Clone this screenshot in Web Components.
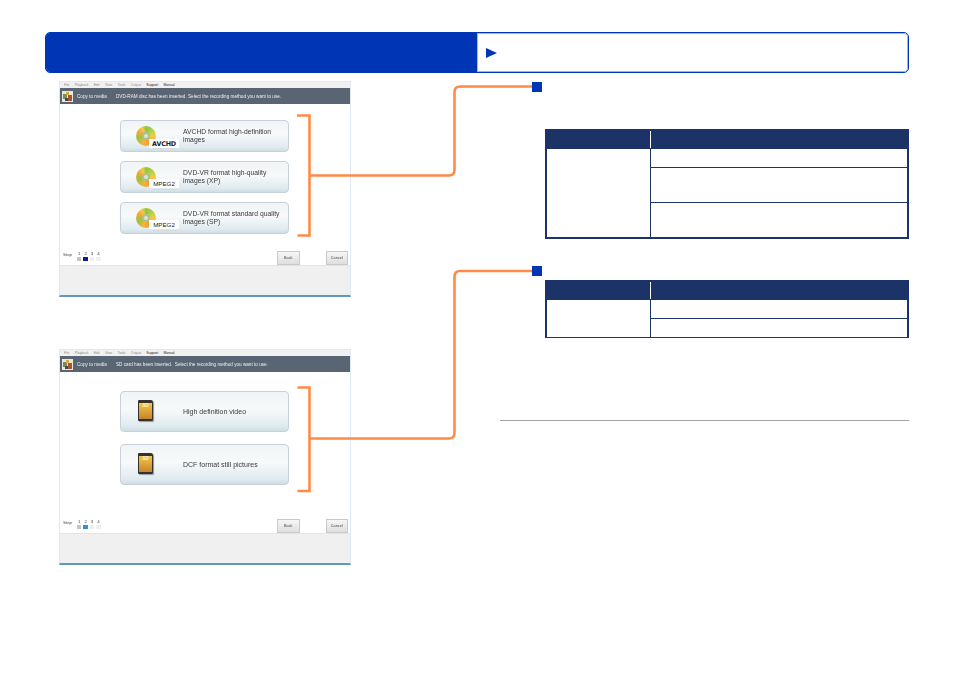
<!DOCTYPE html>
<html lang="en">
<head>
<meta charset="utf-8">
<title>Copy to media</title>
<style>
  html, body { margin: 0; background: #fff; }
  body { font-family: 'Liberation Sans', Arial, sans-serif; overflow: hidden; }
</style>
</head>
<body>
<manual-page>
  <media-screen slot="left" message="DVD-RAM disc has been inserted. Select the recording method you want to use." step-color="#0a1f8f" stack-top="39" btn-height="32" btn-gap="9">
    <media-button kind="disc" badge="AVCHD">AVCHD format high-definition<br>images</media-button>
    <media-button kind="disc" badge="MPEG2">DVD-VR format high-quality<br>images (XP)</media-button>
    <media-button kind="disc" badge="MPEG2">DVD-VR format standard quality<br>images (SP)</media-button>
  </media-screen>
  <media-screen slot="left" message="SD card has been inserted.  Select the recording method you want to use." step-color="#3a8ed8" stack-top="42" btn-height="41" btn-gap="12">
    <media-button kind="sd">High definition video</media-button>
    <media-button kind="sd">DCF format still pictures</media-button>
  </media-screen>

  <spec-section slot="right" gap="37" top="1" rows="18,35,35" bottom-border="2"></spec-section>
  <spec-section slot="right" gap="4" top="27" rows="18,19" bottom-border="1"></spec-section>
</manual-page>

<script>
class ManualPage extends HTMLElement {
  constructor () {
    super()
    this.shadow = this.attachShadow({ mode: 'open' })
  }

  connectedCallback () {
    this.shadow.innerHTML = /*html*/`
    <style>
      :host {
        box-sizing: border-box;
        display: block;
        height: 673px;
        padding: 32px 45px 0;
        position: relative;
        width: 954px;
      }

      .header {
        border: 1px solid #0035b5;
        border-radius: 5px;
        box-sizing: border-box;
        display: flex;
        height: 41px;
        overflow: hidden;
      }

      .header-title {
        background-color: #0035b5;
        flex: 0 0 431px;
      }

      .header-link {
        align-items: center;
        border-radius: 0 4px 4px 0;
        box-shadow: inset 0 0 0 1px #9fb6e6;
        display: flex;
        flex: 1 1 auto;
        padding-left: 9px;
      }

      .arrow {
        border-bottom: 5.5px solid transparent;
        border-left: 11px solid #0035b5;
        border-top: 5.5px solid transparent;
        height: 0;
        width: 0;
      }

      .columns {
        display: grid;
        grid-template-columns: 455px 409px;
        margin-top: 8px;
      }

      .left {
        display: flex;
        flex-direction: column;
        gap: 52px;
        padding-left: 14px;
      }

      .rule {
        border-top: 1px solid #a3a3a3;
        margin-top: 82px;
      }

      svg {
        left: 0;
        pointer-events: none;
        position: absolute;
        top: 0;
      }
    </style>

    <div class="header">
      <div class="header-title"></div>
      <div class="header-link"><div class="arrow"></div></div>
    </div>

    <div class="columns">
      <div class="left"><slot name="left"></slot></div>
      <div class="right">
        <slot name="right"></slot>
        <div class="rule"></div>
      </div>
    </div>

    <svg width="954" height="673" viewBox="0 0 954 673" fill="none" stroke="#ff8b47" stroke-width="2.6">
      <path d="M297 115.5H309.5V235.5H297.5"/>
      <path d="M309.5 175.5H449Q454.5 175.5 454.5 170V92Q454.5 86.5 460 86.5H533"/>
      <path d="M297.5 387.5H309.5V491H297.5"/>
      <path d="M309.5 438.5H449Q454.5 438.5 454.5 433V277Q454.5 271 460 271H533"/>
    </svg>
    `
  }
}

class MediaScreen extends HTMLElement {
  constructor () {
    super()
    this.shadow = this.attachShadow({ mode: 'open' })
  }

  connectedCallback () {
    const message = this.getAttribute('message')
    const stepColor = this.getAttribute('step-color')
    const stackTop = this.getAttribute('stack-top')
    const height = this.getAttribute('btn-height')
    const gap = this.getAttribute('btn-gap')
    const menu = ['File', 'Playback', 'Edit', 'View', 'Tools', 'Output', 'Support', 'Manual']
    const steps = ['#c4c4c4', stepColor, '#eeeeee', '#f0f0f0']

    this.shadow.innerHTML = /*html*/`
    <style>
      :host {
        --btn-height: ${height}px;
        border-bottom: 2px solid #5f9ab8;
        border-left: 1px solid #dfe9f2;
        border-right: 1px solid #dfe9f2;
        border-top: 1px solid #dfe9f2;
        box-sizing: border-box;
        color: #444;
        display: flex;
        filter: blur(0.3px);
        flex-direction: column;
        font-family: 'Liberation Sans', Arial, sans-serif;
        height: 216px;
        width: 292px;
      }

      .menu {
        align-items: center;
        background-color: #f1f1f1;
        color: #8a8a8a;
        display: flex;
        flex: 0 0 6px;
        font-size: 3.4px;
        gap: 5.3px;
        padding-left: 4px;
      }

      .menu span:nth-child(n+7) {
        color: #222;
      }

      .titlebar {
        align-items: center;
        background-color: #5a6573;
        color: #eef0f2;
        display: flex;
        flex: 0 0 16px;
        font-size: 4.65px;
        padding-left: 2px;
        white-space: pre;
      }

      .titlebar svg {
        margin-right: 4px;
      }

      .titlebar .name {
        flex: 0 0 39px;
      }

      .stack {
        display: flex;
        flex-direction: column;
        gap: ${gap}px;
        padding: ${stackTop - 23}px 61px 0 60px;
      }

      .body {
        display: flex;
        flex: 1 1 auto;
        flex-direction: column;
        justify-content: space-between;
      }

      .bottom {
        align-items: flex-end;
        display: flex;
        height: 15px;
        justify-content: space-between;
        padding: 0 2px 0 3px;
      }

      .steps {
        display: flex;
        font-size: 4.4px;
        gap: 5px;
        padding-bottom: 4px;
      }

      .step-list {
        display: flex;
        gap: 2px;
      }

      .step {
        align-items: center;
        display: flex;
        flex-direction: column;
        gap: 1px;
        line-height: 4px;
        width: 4.4px;
      }

      .step i {
        display: block;
        height: 4px;
        width: 4.4px;
      }

      .actions {
        display: flex;
        gap: 26px;
      }

      .action {
        background: linear-gradient(#f6f6f6, #dedede);
        border: 1px solid #c9c9c9;
        box-sizing: border-box;
        font-size: 3.8px;
        height: 14px;
        line-height: 12px;
        text-align: center;
        width: 22.5px;
      }

      .footer {
        background-color: #f0f0f0;
        border-top: 1px solid #e4e4e4;
        box-sizing: border-box;
        flex: 0 0 30px;
      }
    </style>

    <div class="menu">${menu.map(item => `<span>${item}</span>`).join('')}</div>
    <div class="titlebar">
      <svg width="11" height="11" viewBox="0 0 11 11">
        <rect width="11" height="11" fill="#e9e6da"/>
        <rect x="1" y="3" width="4" height="5" fill="#7d8a5c"/>
        <rect x="4" y="1" width="3" height="3" fill="#d9a93c"/>
        <rect x="6" y="4" width="4" height="6" fill="#a8552e"/>
        <rect x="3" y="7" width="3" height="3" fill="#3f4a55"/>
      </svg>
      <span class="name">Copy to media</span>
      <span>${message}</span>
    </div>
    <div class="body">
      <div class="stack"><slot></slot></div>
      <div class="bottom">
        <div class="steps">
          <span>Step</span>
          <div class="step-list">
            ${steps.map((color, i) => `<div class="step"><span>${i + 1}</span><i style="background:${color}"></i></div>`).join('')}
          </div>
        </div>
        <div class="actions">
          <div class="action">Back</div>
          <div class="action">Cancel</div>
        </div>
      </div>
    </div>
    <div class="footer"></div>
    `
  }
}

class MediaButton extends HTMLElement {
  constructor () {
    super()
    this.shadow = this.attachShadow({ mode: 'open' })
  }

  connectedCallback () {
    const kind = this.getAttribute('kind')
    const badge = this.getAttribute('badge')
    const disc = /*html*/`
      <div class="disc"><div class="hole"></div></div>
      <div class="badge ${badge === 'AVCHD' ? 'avchd' : ''}">${badge}</div>
      <div class="shine"></div>
    `
    const sd = /*html*/`
      <div class="sd"><span>SD</span></div>
    `

    this.shadow.innerHTML = /*html*/`
    <style>
      :host {
        align-items: center;
        background: linear-gradient(#f1f4f6 0%, #f7f9fa 45%, #dfeaef 88%, #cfdde4 100%);
        border: 1px solid #c8d1d9;
        border-radius: 4px;
        box-sizing: border-box;
        color: #3a3a3a;
        display: flex;
        font-family: 'Liberation Sans', Arial, sans-serif;
        font-size: ${kind === 'sd' ? 7 : 6.75}px;
        height: var(--btn-height);
        line-height: 8px;
        position: relative;
      }

      .icon {
        flex: 0 0 62px;
        height: 100%;
        position: relative;
      }

      .disc {
        background: conic-gradient(#8cc63f 0deg, #b5d24a 50deg, #f7c948 90deg, #f59a2c 150deg, #f2b53c 200deg, #9cc23c 250deg, #f2a93a 300deg, #f6c94a 335deg, #8cc63f 360deg);
        border-radius: 50%;
        height: 20px;
        left: 15px;
        position: absolute;
        top: 5px;
        width: 20px;
      }

      .hole {
        background-color: #dfe4e0;
        border: 2px solid #a8c48a;
        border-radius: 50%;
        box-sizing: border-box;
        height: 8px;
        margin: 6px;
        width: 8px;
      }

      .badge {
        background-color: #fff;
        color: #222;
        font-size: 6.2px;
        height: 9px;
        left: 28px;
        line-height: 10px;
        position: absolute;
        text-align: center;
        top: 17px;
        width: 30px;
      }

      .avchd {
        font-family: 'DejaVu Sans', sans-serif;
        font-size: 6.4px;
        font-weight: 700;
        letter-spacing: -0.2px;
        top: 18px;
      }

      .shine {
        background-color: #d5dbde;
        height: 1px;
        left: 32px;
        position: absolute;
        top: 27px;
        width: 23px;
      }

      .sd {
        background: linear-gradient(#efc74a, #e2a83a 45%, #c4842c);
        border: 1px solid #35312d;
        border-bottom-width: 2px;
        border-left-width: 1.5px;
        border-radius: 1px 2px 1px 1px;
        border-top-width: 3px;
        box-shadow: 1px 1px 1px #8f9a9f;
        box-sizing: border-box;
        color: #fff6c8;
        font-size: 4.6px;
        font-style: italic;
        font-weight: 700;
        height: 21px;
        left: 17px;
        line-height: 6px;
        position: absolute;
        text-align: center;
        top: 8px;
        width: 15px;
      }
    </style>
    <div class="icon">${kind === 'disc' ? disc : sd}</div>
    <div class="label"><slot></slot></div>
    `
  }
}

class SpecSection extends HTMLElement {
  constructor () {
    super()
    this.shadow = this.attachShadow({ mode: 'open' })
  }

  connectedCallback () {
    const rows = this.getAttribute('rows').split(',').map(Number)
    const gap = this.getAttribute('gap')
    const top = this.getAttribute('top')
    const bottom = this.getAttribute('bottom-border')

    this.shadow.innerHTML = /*html*/`
    <style>
      :host {
        display: block;
        padding-top: ${top}px;
      }

      .marker {
        background-color: #0035b5;
        height: 10px;
        margin-left: 32px;
        position: relative;
        width: 10px;
        z-index: 1;
      }

      .table {
        border: 2px solid #1b3366;
        border-bottom-width: ${bottom}px;
        border-top: 0;
        box-sizing: border-box;
        display: grid;
        grid-template-columns: 104px 1fr;
        margin-left: 45px;
        margin-top: ${gap}px;
      }

      .head {
        background-color: #1b3366;
        grid-column: 1 / 3;
        height: 20px;
        margin: 0 -2px;
        position: relative;
      }

      .head::after {
        background-color: #fff;
        bottom: 1px;
        content: '';
        left: 105px;
        position: absolute;
        top: 2px;
        width: 1px;
      }

      .side {
        border-right: 1px solid #1b3366;
        grid-row: 2 / ${rows.length + 2};
      }

      .cell {
        box-sizing: border-box;
      }

      .cell + .cell {
        border-top: 1px solid #1b3366;
      }

      .cells {
        display: flex;
        flex-direction: column;
        grid-column: 2;
        grid-row: 2 / ${rows.length + 2};
      }
    </style>
    <div class="marker"></div>
    <div class="table">
      <div class="head"></div>
      <div class="side"></div>
      <div class="cells">
        ${rows.map(height => `<div class="cell" style="height:${height}px"></div>`).join('')}
      </div>
    </div>
    `
  }
}

customElements.define('manual-page', ManualPage)
customElements.define('media-screen', MediaScreen)
customElements.define('media-button', MediaButton)
customElements.define('spec-section', SpecSection)
</script>
</body>
</html>
